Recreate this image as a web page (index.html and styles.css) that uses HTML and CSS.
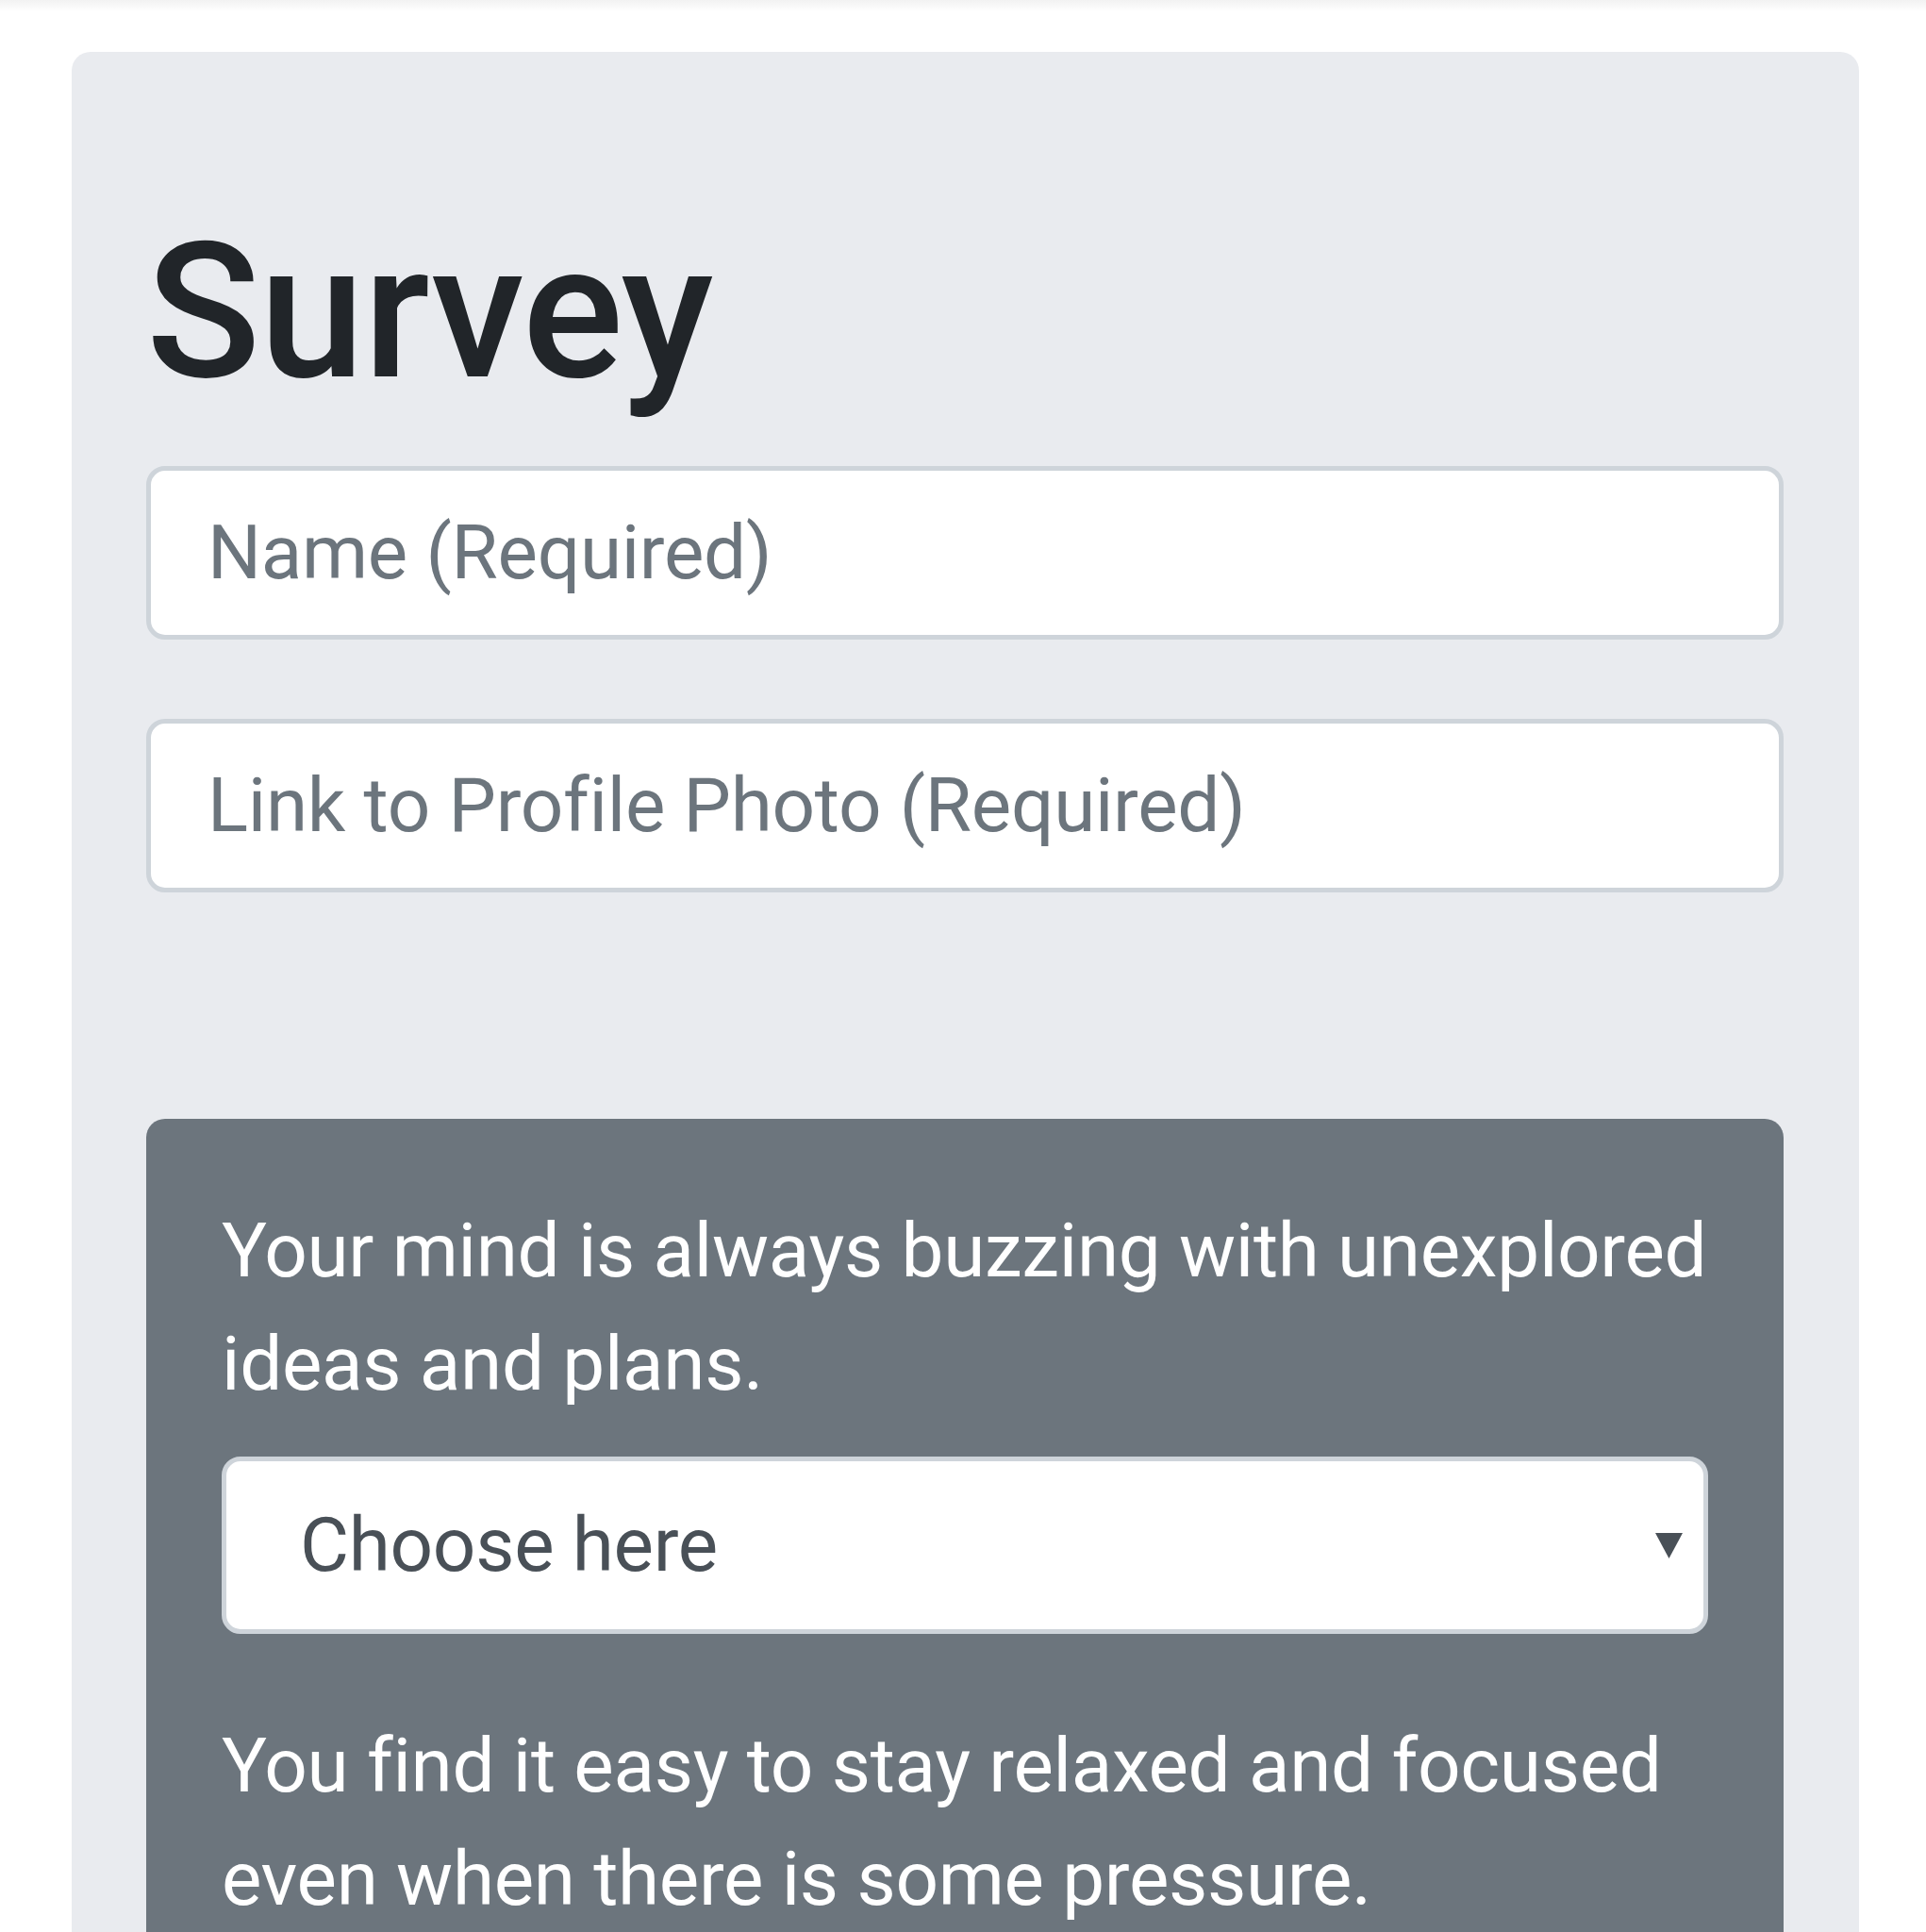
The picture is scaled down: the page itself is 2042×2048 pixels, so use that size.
FILE: index.html
```html
<!DOCTYPE html>
<html lang="en">
<head>
<meta charset="utf-8">
<title>Survey</title>
<link rel="stylesheet" href="styles.css">
</head>
<body>
<div class="topbar"></div>
<main class="jumbotron">
  <h1 class="title">Survey</h1>
  <form class="survey">
    <div class="form-group">
      <input class="form-control" type="text" placeholder="Name (Required)">
    </div>
    <div class="form-group">
      <input class="form-control" type="text" placeholder="Link to Profile Photo (Required)">
    </div>
    <section class="questions">
      <div class="question">
        <label class="q-label">Your mind is always buzzing with unexplored ideas and plans.</label>
        <div class="select-wrap">
          <select class="q-select">
            <option>Choose here</option>
          </select>
          <svg class="select-arrow" width="29" height="27" viewBox="0 0 29 27"><polygon points="0,0 29,0 14.5,27" fill="#495057"/></svg>
        </div>
      </div>
      <div class="question">
        <label class="q-label">You find it easy to stay relaxed and focused even when there is some pressure.</label>
        <div class="select-wrap">
          <select class="q-select">
            <option>Choose here</option>
          </select>
          <svg class="select-arrow" width="29" height="27" viewBox="0 0 29 27"><polygon points="0,0 29,0 14.5,27" fill="#495057"/></svg>
        </div>
      </div>
    </section>
  </form>
</main>
</body>
</html>
```
FILE: styles.css
```css
html, body {
  margin: 0;
  padding: 0;
  background: #ffffff;
  font-family: Roboto, "Liberation Sans", Arial, sans-serif;
}

.topbar {
  height: 12px;
  background: linear-gradient(#f2f2f2, #ffffff);
}

.jumbotron {
  box-sizing: border-box;
  margin: 43px 0 0 76px;
  width: 1895px;
  padding: 156px 80px 80px 79px;
  background: #e9ebef;
  border-radius: 20px;
}

.title {
  margin: 0 0 43px 0;
  font-size: 200px;
  line-height: 240px;
  font-weight: 500;
  color: #212529;
  letter-spacing: -1px;
}

.survey {
  margin: 0;
}

.form-group {
  margin-bottom: 84px;
}

.form-control {
  display: block;
  box-sizing: border-box;
  width: 100%;
  height: 184px;
  margin: 0;
  padding: 0 60px;
  border: 5px solid #ced4da;
  border-radius: 20px;
  background: #ffffff;
  font-family: Roboto, "Liberation Sans", Arial, sans-serif;
  font-size: 80px;
  letter-spacing: -0.3px;
  color: #495057;
  outline: none;
}

.form-control::placeholder {
  color: #6c757d;
  opacity: 1;
}

.questions {
  margin-top: 240px;
  background: #6c757d;
  border-radius: 20px;
  padding: 80px 80px 80px 80px;
}

.question {
  margin-bottom: 80px;
}

.q-label {
  display: block;
  margin-bottom: 38px;
  margin-right: -20px;
  font-size: 80px;
  line-height: 120px;
  letter-spacing: -0.3px;
  color: #ffffff;
}

.select-wrap {
  position: relative;
}

.q-select {
  display: block;
  box-sizing: border-box;
  width: 100%;
  height: 188px;
  margin: 0;
  padding: 0 80px 0 78px;
  border: 5px solid #ced4da;
  border-radius: 20px;
  background: #ffffff;
  appearance: none;
  -webkit-appearance: none;
  font-family: Roboto, "Liberation Sans", Arial, sans-serif;
  font-size: 80px;
  letter-spacing: -0.3px;
  color: #495057;
  outline: none;
}

.select-arrow {
  position: absolute;
  right: 27px;
  top: 81px;
  pointer-events: none;
}
```
